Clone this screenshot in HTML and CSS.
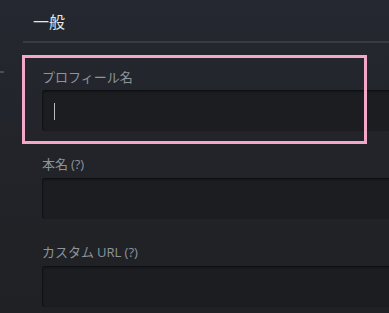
FILE: index.html
```html
<!DOCTYPE html>
<html lang="ja">
<head>
<meta charset="utf-8">
<link rel="stylesheet" href="styles.css">
</head>
<body>
<div class="side-mark"></div>
<main class="panel">
  <h2 class="heading">一般</h2>
  <div class="divider"></div>
  <div class="fields">
    <div class="field field-highlight">
      <label class="label">プロフィール名</label>
      <div class="input"><span class="caret"></span></div>
    </div>
    <div class="field">
      <label class="label">本名 <span class="latin">(?)</span></label>
      <div class="input"></div>
    </div>
    <div class="field">
      <label class="label">カスタム <span class="latin">URL (?)</span></label>
      <div class="input"></div>
    </div>
  </div>
</main>
</body>
</html>
```
FILE: styles.css
```css
html, body {
  margin: 0;
  padding: 0;
  height: 100%;
  overflow: hidden;
}
body {
  background: linear-gradient(180deg, #252830 0%, #212328 60%, #1f2124 100%);
  font-family: "Noto Sans CJK JP", "Noto Sans", sans-serif;
  position: relative;
}
.side-mark {
  position: absolute;
  left: 0;
  top: 71px;
  width: 4px;
  height: 2px;
  background: #4a4f57;
}
.panel {
  padding-left: 23px;
}
.heading {
  margin: 0;
  padding: 10px 0 0 10px;
  height: 33px;
  box-sizing: border-box;
  font-size: 16px;
  font-weight: normal;
  line-height: 22px;
  color: #e6e6e6;
}
.divider {
  height: 2px;
  margin-top: 8px;
  background: #383b42;
}
.fields {
  padding: 24px 0 0 19px;
  display: flex;
  flex-direction: column;
  gap: 23px;
}
.field {
  position: relative;
  display: flex;
  flex-direction: column;
  gap: 4px;
}
.field-highlight::after {
  content: "";
  position: absolute;
  left: -20px;
  top: -12px;
  width: 339px;
  height: 83px;
  border: 3px solid #f3a7c9;
  pointer-events: none;
}
.label {
  font-size: 13px;
  line-height: 19px;
  color: #8d949c;
}
.latin {
  font-family: "Open Sans", "Noto Sans", sans-serif;
  font-size: 13px;
}
.input {
  height: 41px;
  margin-right: -20px;
  box-sizing: border-box;
  background: #1b1d21;
  border-radius: 3px 0 0 3px;
  border-top: 1px solid #0e0f12;
  border-left: 1px solid #111215;
  box-shadow: inset 0 1px 2px rgba(0,0,0,0.3);
  position: relative;
}
.caret {
  position: absolute;
  left: 11px;
  top: 12px;
  width: 1px;
  height: 17px;
  background: #b8bcc0;
}
```
